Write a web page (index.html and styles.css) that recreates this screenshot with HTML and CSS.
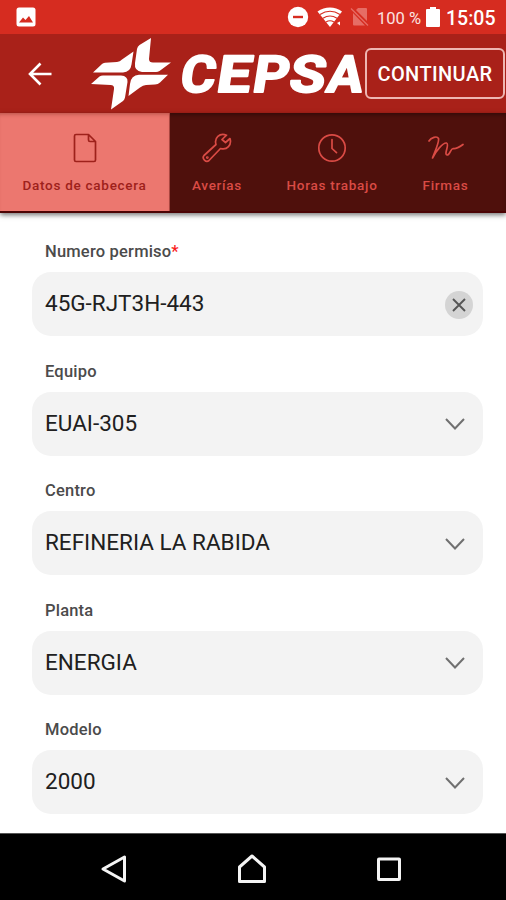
FILE: index.html
```html
<!DOCTYPE html>
<html lang="es">
<head>
<meta charset="utf-8">
<title>Cepsa</title>
<link rel="stylesheet" href="styles.css">
</head>
<body>
<div class="screen">
  <div class="status">
    <svg class="st-photo" width="20" height="20" viewBox="0 0 20 20"><rect x=".5" y=".5" width="19" height="19" rx="2.5" fill="#fff"/><path d="M3 15.5 7 10.5l2.500 2.500L13 9l4 6.500z" fill="#d62c20"/></svg>
    <svg class="st-dnd" width="22" height="22" viewBox="0 0 22 22"><circle cx="11" cy="11" r="10.200" fill="#fff"/><path d="M6 11h10" stroke="#d62c20" stroke-width="2.400"/></svg>
    <svg class="st-wifi" width="26" height="21" viewBox="0 0 26 21"><path d="M.5 4.500C8 -1 18-1 25 4.500L13 20z" fill="#fff"/><path d="M3 7.500q10-6.500 20 0M6 11.300q7-4.500 14 0M9 15q4-2.500 8 0" fill="none" stroke="#d62c20" stroke-width="1.100"/><path d="M18 20l3-9h5v9z" fill="#d62c20"/><path d="M20 16l3-1.500v4z" fill="#fff"/></svg>
    <svg class="st-sim" width="20" height="20" viewBox="0 0 20 20"><path d="M8 1h8q1 0 1 1v12L6 3zM3 6l12 12.500H4q-1 0-1-1z" fill="#e66d65"/><path d="M1 1.500 18 18.500" stroke="#e66d65" stroke-width="1.200"/></svg>
    <span class="battery-text">100 %</span>
    <svg class="st-bat" width="14" height="20" viewBox="0 0 14 20"><path d="M4 0h6v2h3q1 0 1 1v16q0 1-1 1H1q-1 0-1-1V3q0-1 1-1h3z" fill="#fff"/></svg>
    <span class="clock">15:05</span>
  </div>
  <header class="toolbar">
    <svg class="back" width="24" height="24" viewBox="0 0 24 24"><path d="M23.500 12H2M12.500 1.500 2 12l10.500 10.500" fill="none" stroke="#fff" stroke-width="2.600"/></svg>
    <svg class="logo" width="276" height="79" viewBox="90 34 276 79">
      <g fill="#fff"><path d="M93 72.500 102 64Q103 63 105 62.800L117 62Q120 61.500 122 59.500L133.500 51.500 131.500 64.500Q130.500 72 123 72.500z"/><path d="M151 38 149 59Q149 62.500 153 62.500H171L159.500 71Q158 72 156 72H142Q134 71 135 63L137 49Q137.500 46.500 139.500 45z"/><path d="M91 84 99.500 76.500Q101 75.500 103 75.500H121Q128 76 127.500 82L125 97.500Q124.500 99.500 123 101L111 109.500 114 89Q114.500 85 110.500 85z"/><path d="M168 74.800 160 82.500Q158 84.500 155 84.500L146 85Q143 85.300 140 87.500L128.500 96 130 84Q131 75 139 74.800z"/></g>
      <text class="wordmark" transform="translate(0 92) skewX(-9)" y="0"><tspan x="178.500" textLength="35" lengthAdjust="spacingAndGlyphs">C</tspan><tspan x="215" textLength="34" lengthAdjust="spacingAndGlyphs">E</tspan><tspan x="251" textLength="36" lengthAdjust="spacingAndGlyphs">P</tspan><tspan x="287.500" textLength="36" lengthAdjust="spacingAndGlyphs">S</tspan><tspan x="325" textLength="36" lengthAdjust="spacingAndGlyphs">A</tspan></text>
    </svg>
    <button class="continue">CONTINUAR</button>
  </header>
  <nav class="tabs">
    <div class="tab active"><svg width="30" height="30" viewBox="0 0 30 30"><path d="M18.500 1.500H6Q4.500 1.500 4.500 3v24Q4.500 28.500 6 28.500h18q1.500 0 1.500-1.500V8.500zM18.500 1.500V7q0 1.500 1.500 1.500h5.500"/></svg><span>Datos de cabecera</span></div>
    <div class="tab averias"><svg width="30" height="30" viewBox="0 0 30 30"><path d="M24.500 2.200C17.500-.5 12 5 14 11.500L2 22.500c-2.500 3 2 7.500 5 5L18.500 15.500c6.500 2 11.500-3.500 9.500-10L23.500 9.500 20 6.500z"/><circle cx="5.300" cy="24.600" r=".6"/></svg><span>Averías</span></div>
    <div class="tab horas"><svg width="30" height="30" viewBox="0 0 30 30"><circle cx="15" cy="15" r="13.200"/><path d="M15 6.500v9l4.500 4.200"/></svg><span>Horas trabajo</span></div>
    <div class="tab firmas"><svg width="36" height="30" viewBox="0 0 36 30"><path d="M1 8C3 4.500 9 2.500 10.500 5.500 11.500 9 7.500 17 4.500 25 8 18 15 9.500 18.500 10c3.500 1-3 11.500.5 12 3 .3 3.500-6.500 6-6.500 2 .8 5-.5 10-4"/></svg><span>Firmas</span></div>
  </nav>
  <main class="form">
    <div class="group"><label>Numero permiso<b>*</b></label><div class="field"><span>45G-RJT3H-443</span><svg class="clear" width="28" height="28" viewBox="0 0 28 28"><circle cx="14" cy="14" r="14" fill="#d4d4d4"/><path d="m8 8 12 12M20 8 8 20" stroke="#555" stroke-width="1.900"/></svg></div></div>
    <div class="group"><label>Equipo</label><div class="field"><span>EUAI-305</span><svg class="chev" width="20" height="12" viewBox="0 0 20 12"><path d="m1 1 9 9.500L19 1"/></svg></div></div>
    <div class="group"><label>Centro</label><div class="field"><span>REFINERIA LA RABIDA</span><svg class="chev" width="20" height="12" viewBox="0 0 20 12"><path d="m1 1 9 9.500L19 1"/></svg></div></div>
    <div class="group"><label>Planta</label><div class="field"><span>ENERGIA</span><svg class="chev" width="20" height="12" viewBox="0 0 20 12"><path d="m1 1 9 9.500L19 1"/></svg></div></div>
    <div class="group"><label>Modelo</label><div class="field"><span>2000</span><svg class="chev" width="20" height="12" viewBox="0 0 20 12"><path d="m1 1 9 9.500L19 1"/></svg></div></div>
  </main>
  <footer class="navbar">
    <svg width="28" height="30" viewBox="0 0 28 30"><path d="M24.500 3v24L3 15z"/></svg>
    <svg width="30" height="30" viewBox="0 0 30 30"><path d="M2.500 13 15 2 27.500 13v14.500h-25z"/></svg>
    <svg width="26" height="30" viewBox="0 0 26 30"><rect x="2.500" y="5" width="21" height="20.500" rx=".5"/></svg>
  </footer>
</div>
</body>
</html>
```

FILE: styles.css
```css
* { box-sizing: border-box; }
body { margin: 0; font-family: Roboto, "Liberation Sans", sans-serif; background: #fff; }
svg { display: block; flex: none; }
.screen { width: 506px; height: 900px; display: flex; flex-direction: column; overflow: hidden; }
.status { height: 34px; background: #d62c20; display: flex; align-items: center; padding: 0 11px 0 16px; color: #fff; flex: none; }
.st-dnd { margin-left: 251px; }
.st-wifi { margin-left: 8px; }
.st-sim { margin-left: 7px; }
.battery-text { width: 44px; margin: 2px 0 0 7px; font-size: 16.5px; white-space: nowrap; color: #fbe3e1; }
.st-bat { margin-left: 5px; }
.clock { margin: 2px 0 0 6px; font-size: 19.5px; font-weight: 500; white-space: nowrap; }
.toolbar { height: 79px; background: #a92119; display: flex; align-items: center; flex: none; }
.back { margin-left: 28px; }
.logo { margin-left: 38px; overflow: visible; }
.wordmark { font-family: Roboto, sans-serif; font-weight: 700; font-size: 51px; fill: #fff; stroke: #fff; stroke-width: 2px; stroke-linejoin: round; }
.continue { width: 140px; height: 51px; margin: 0 0 0 -1px; padding: 0; border: 2px solid #eeb6b2; border-radius: 6px; background: #a92119; color: #fff; font: 500 20px Roboto, sans-serif; letter-spacing: .4px; flex: none; position: relative; }
.tabs { height: 100px; display: flex; background: #4f100c; border-bottom: 2px solid #4b0304; box-shadow: inset 0 3px 4px -1px rgba(0,0,0,.35), 0 2px 5px rgba(0,0,0,.55); flex: none; position: relative; }
.tab { display: flex; flex-direction: column; align-items: center; padding-top: 20px; gap: 13px; color: #da4b45; font-size: 13.5px; font-weight: 500; line-height: 18px; letter-spacing: .73px; white-space: nowrap; }
.tab svg { fill: none; stroke: currentColor; stroke-width: 1.700; stroke-linejoin: round; stroke-linecap: round; }
.tab.active { width: 170px; background: #ec776f; color: #9e211b; border-right: 1px solid #a94640; box-shadow: inset 0 4px 4px -3px rgba(100,20,10,.4); }
.averias { width: 94px; }
.horas { width: 136px; }
.firmas { width: 91px; }
.form { height: 620px; flex: none; padding: 27px 23.500px 0 32px; }
.group { height: 119.500px; }
.group label { display: block; height: 32px; padding-left: 13px; font-size: 16.5px; line-height: 24px; font-weight: 500; color: #4b4b4b; letter-spacing: .2px; }
.group b { color: #fa1b20; font-weight: 500; }
.field { height: 64px; border-radius: 19px; background: #f3f3f3; display: flex; align-items: center; justify-content: space-between; padding: 0 18px 2px 13px; color: #202020; font-size: 22.5px; }
.clear { margin: 3px -8px 0 0; }
.chev { margin-top: 3px; fill: none; stroke: #707070; stroke-width: 2; }
.navbar { height: 67px; background: #000; border-top: 1px solid #555; display: flex; align-items: center; justify-content: space-between; padding: 4px 104px 0 100px; flex: none; }
.navbar svg { fill: none; stroke: #f4f4f4; stroke-width: 3; stroke-linejoin: round; }
```
